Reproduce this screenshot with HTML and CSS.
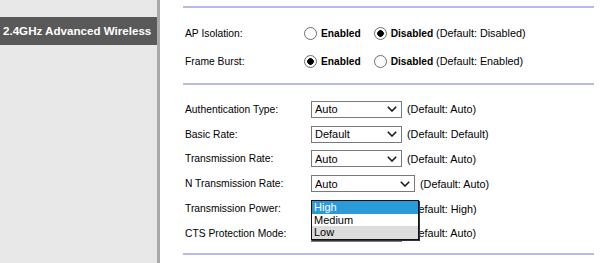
FILE: index.html
```html
<!DOCTYPE html>
<html lang="en">
  <head>
    <meta charset="UTF-8" />
    <meta name="viewport" content="width=device-width, initial-scale=1.0" />
    <title>2.4GHz Advanced Wireless</title>
    <link rel="stylesheet" href="styles.css">
  </head>
  <body>
    <div class="page">
      <aside class="sidebar">
        <div class="nav-current">2.4GHz Advanced Wireless</div>
      </aside>
      <main class="content">
        <div class="rule"></div>
        <div class="section radio-section">
          <div class="row">
            <span class="label">AP Isolation:</span>
            <div class="control">
              <label class="option"><input type="radio" name="apIsolation" value="1" /><b>Enabled</b></label>
              <label class="option"><input type="radio" name="apIsolation" value="0" checked /><b>Disabled</b></label>
              <span class="default">(Default: Disabled)</span>
            </div>
          </div>
          <div class="row">
            <span class="label">Frame Burst:</span>
            <div class="control">
              <label class="option"><input type="radio" name="frameBurst" value="1" checked /><b>Enabled</b></label>
              <label class="option"><input type="radio" name="frameBurst" value="0" /><b>Disabled</b></label>
              <span class="default">(Default: Enabled)</span>
            </div>
          </div>
        </div>
        <div class="rule"></div>
        <div class="section select-section">
          <div class="row">
            <span class="label">Authentication Type:</span>
            <div class="control">
              <span class="select-wrap">
                <select name="authType">
                  <option>Auto</option>
                  <option>Shared Key</option>
                </select>
                <svg class="chevron" width="10" height="6" viewBox="0 0 10 6"><polyline points="0.8,0.8 5,5 9.2,0.8" /></svg>
              </span>
              <span class="default">(Default: Auto)</span>
            </div>
          </div>
          <div class="row">
            <span class="label">Basic Rate:</span>
            <div class="control">
              <span class="select-wrap">
                <select name="basicRate">
                  <option>Default</option>
                  <option>1-2 Mbps</option>
                  <option>All</option>
                </select>
                <svg class="chevron" width="10" height="6" viewBox="0 0 10 6"><polyline points="0.8,0.8 5,5 9.2,0.8" /></svg>
              </span>
              <span class="default">(Default: Default)</span>
            </div>
          </div>
          <div class="row">
            <span class="label">Transmission Rate:</span>
            <div class="control">
              <span class="select-wrap">
                <select name="txRate">
                  <option>Auto</option>
                </select>
                <svg class="chevron" width="10" height="6" viewBox="0 0 10 6"><polyline points="0.8,0.8 5,5 9.2,0.8" /></svg>
              </span>
              <span class="default">(Default: Auto)</span>
            </div>
          </div>
          <div class="row">
            <span class="label">N Transmission Rate:</span>
            <div class="control">
              <span class="select-wrap wide">
                <select name="nTxRate">
                  <option>Auto</option>
                </select>
                <svg class="chevron" width="10" height="6" viewBox="0 0 10 6"><polyline points="0.8,0.8 5,5 9.2,0.8" /></svg>
              </span>
              <span class="default">(Default: Auto)</span>
            </div>
          </div>
          <div class="row">
            <span class="label">Transmission Power:</span>
            <div class="control">
              <span class="select-wrap">
                <select name="txPower">
                  <option>High</option>
                  <option>Medium</option>
                  <option>Low</option>
                </select>
                <svg class="chevron" width="10" height="6" viewBox="0 0 10 6"><polyline points="0.8,0.8 5,5 9.2,0.8" /></svg>
                <!-- open dropdown list -->
                <ul class="dropdown">
                  <li class="active">High</li>
                  <li>Medium</li>
                  <li class="hover">Low</li>
                </ul>
              </span>
              <span class="default">(Default: High)</span>
            </div>
          </div>
          <div class="row">
            <span class="label">CTS Protection Mode:</span>
            <div class="control">
              <span class="select-wrap">
                <select name="ctsMode">
                  <option>Auto</option>
                  <option>Disabled</option>
                </select>
                <svg class="chevron" width="10" height="6" viewBox="0 0 10 6"><polyline points="0.8,0.8 5,5 9.2,0.8" /></svg>
              </span>
              <span class="default">(Default: Auto)</span>
            </div>
          </div>
        </div>
        <div class="rule"></div>
      </main>
    </div>
  </body>
</html>
```

FILE: styles.css
```css
body {
  margin: 0;
  font-family: "Liberation Sans", Arial, sans-serif;
  color: #000;
  background: #fff;
}
.page {
  display: flex;
  width: 600px;
  height: 263px;
  overflow: hidden;
}
.sidebar {
  width: 157px;
  flex: none;
  background-color: #e8e8e8;
  border-right: 3px solid #a9a9a9;
  padding-top: 17px;
}
.nav-current {
  height: 28px;
  line-height: 28px;
  padding-left: 3px;
  background-color: #595959;
  color: #fff;
  font-weight: bold;
  font-size: 11.6px;
  white-space: nowrap;
}
.content {
  flex: 1;
  padding: 6px 6px 0 23px;
}
.rule {
  height: 2px;
  background-color: #b9b9e9;
}
.section {
  padding-left: 2px;
}
.radio-section {
  padding: 11px 0 8px 2px;
}
.radio-section .row {
  display: grid;
  grid-template-columns: 119px auto;
  align-items: center;
  height: 28px;
}
.select-section {
  padding: 12px 0 7px 2px;
}
.select-section .row {
  display: grid;
  grid-template-columns: 126px auto;
  align-items: center;
  height: 24.8px;
}
.label {
  font-size: 10.3px;
  white-space: nowrap;
}
.control {
  display: flex;
  align-items: center;
  white-space: nowrap;
}
.default {
  font-size: 10.8px;
}
.option {
  display: flex;
  align-items: center;
  margin-right: 13px;
  font-size: 10.2px;
}
.option:nth-of-type(2) {
  margin-right: 3px;
}
.option input {
  appearance: none;
  width: 13px;
  height: 13px;
  margin: 0 4px 0 0;
  border: 1px solid #6d6d6d;
  border-radius: 50%;
  background: #fff;
}
.option input:checked {
  background: radial-gradient(circle, #000 0, #000 3px, #fff 3.6px);
}
.select-wrap {
  position: relative;
  display: block;
  width: 91px;
  height: 17px;
  margin-right: 5px;
}
.select-wrap.wide {
  width: 104px;
}
.select-wrap select {
  appearance: none;
  display: block;
  width: 100%;
  height: 100%;
  margin: 0;
  padding: 0 0 0 3px;
  border: 1px solid #7a7a7a;
  border-radius: 0;
  background: #fff;
  font-family: "Liberation Sans", Arial, sans-serif;
  font-size: 11px;
  color: #000;
}
.chevron {
  position: absolute;
  right: 5px;
  top: 5.5px;
  pointer-events: none;
}
.chevron polyline {
  fill: none;
  stroke: #1a1a1a;
  stroke-width: 1.6;
}
.dropdown {
  position: absolute;
  top: 0;
  left: 0;
  z-index: 10;
  width: 106px;
  margin: 0;
  padding: 0;
  list-style: none;
  background: #fff;
  border: 1px solid #111;
  box-shadow: 1px 1px 0 #333;
}
.dropdown li {
  height: 12.5px;
  line-height: 12.5px;
  padding-left: 2px;
  font-size: 11px;
}
.dropdown li.active {
  background-color: #2b9ad8;
  color: #fff;
}
.dropdown li.hover {
  background-color: #dcdcdc;
}
```
